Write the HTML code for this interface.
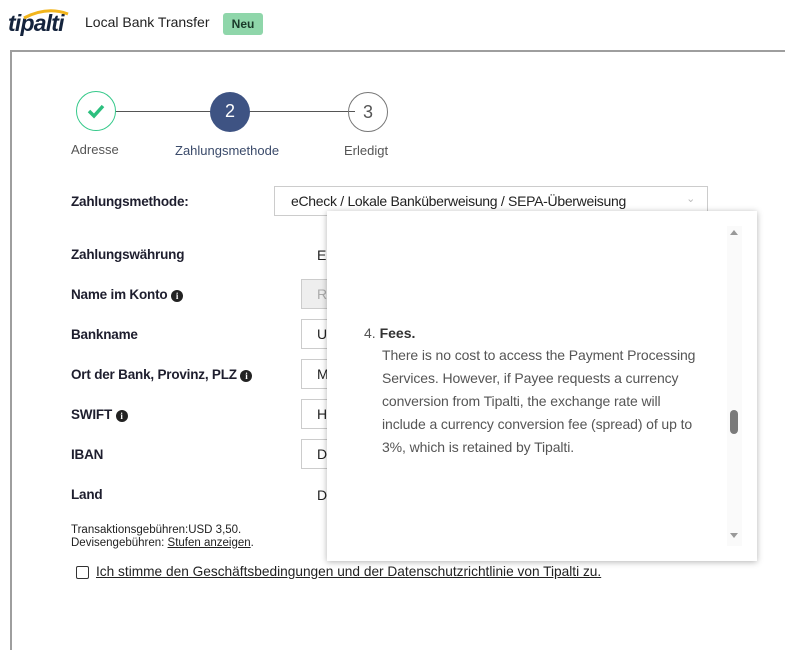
<!DOCTYPE html>
<html><head><meta charset="utf-8"><style>
*{box-sizing:border-box;margin:0;padding:0}
body{width:785px;height:610px;overflow:hidden;background:#fff;font-family:"Liberation Sans",sans-serif;color:#222;position:relative}
.abs{position:absolute}
.frame{left:10px;top:50px;width:800px;height:600px;border:2px solid #9e9e9e;border-right:none;border-bottom:none}
.lbl{left:71px;font-size:13.5px;font-weight:bold;color:#1e1e2e;letter-spacing:-0.2px}
.inp{left:301px;width:120px;height:30px;border:1px solid #ccc;background:#fff;font-size:14px;padding:6px 0 0 15px;color:#222}
.info{display:inline-block;width:12px;height:12px;border-radius:50%;background:#222;color:#fff;font-size:9px;text-align:center;line-height:12px;font-family:"Liberation Serif",serif;font-weight:bold;vertical-align:0px}
.circ{width:40px;height:40px;border-radius:50%;text-align:center;line-height:38px;font-size:18px}
.slbl{font-size:13px;color:#555}
</style></head><body>
<div class="abs" style="left:8px;top:10px;font-size:23px;font-weight:bold;font-style:italic;color:#14233c;letter-spacing:-0.8px">tipalti</div>
<svg class="abs" style="left:22px;top:8px" width="50" height="12"><path d="M2 10 Q25 -2 46 6" stroke="#f2b51c" stroke-width="3" fill="none"/></svg>
<div class="abs" style="left:85px;top:14px;font-size:14px;color:#222">Local Bank Transfer</div>
<div class="abs" style="left:223px;top:13px;width:40px;height:22px;background:#8fd6aa;border-radius:3px;font-size:12px;font-weight:bold;text-align:center;line-height:22px;color:#1b3a2a">Neu</div>
<div class="abs frame"></div>

<div class="abs" style="left:115px;top:111px;width:240px;height:1px;background:#555"></div>
<div class="abs circ" style="left:76px;top:91px;border:1.5px solid #35c98a"><svg width="20" height="20" style="margin-top:9px"><path d="M3 10 L8 15 L17 5" stroke="#2cbf7e" stroke-width="3.5" fill="none"/></svg></div>
<div class="abs circ" style="left:210px;top:92px;background:#3e5383;color:#fff">2</div>
<div class="abs circ" style="left:348px;top:92px;border:1px solid #777;color:#555">3</div>
<div class="abs slbl" style="left:71px;top:142px">Adresse</div>
<div class="abs slbl" style="left:175px;top:143px;color:#3a4a6a">Zahlungsmethode</div>
<div class="abs slbl" style="left:344px;top:143px">Erledigt</div>

<div class="abs lbl" style="top:194px">Zahlungsmethode:</div>
<div class="abs" style="left:274px;top:186px;width:434px;height:30px;border:1px solid #ccc;font-size:14px;padding:6px 0 0 16px;letter-spacing:-0.3px">eCheck / Lokale Banküberweisung / SEPA-Überweisung<span style="position:absolute;right:12px;top:5px;color:#bbb;font-size:11px">&#8964;</span></div>

<div class="abs lbl" style="top:247px">Zahlungswährung</div>
<div class="abs" style="left:317px;top:247px;font-size:14px">EUR</div>
<div class="abs lbl" style="top:287px">Name im Konto <span class="info">i</span></div>
<div class="abs inp" style="top:279px;background:#eee;color:#aaa">R</div>
<div class="abs lbl" style="top:327px">Bankname</div>
<div class="abs inp" style="top:319px">U</div>
<div class="abs lbl" style="top:367px">Ort der Bank, Provinz, PLZ <span class="info">i</span></div>
<div class="abs inp" style="top:359px">M</div>
<div class="abs lbl" style="top:407px">SWIFT <span class="info">i</span></div>
<div class="abs inp" style="top:399px">H</div>
<div class="abs lbl" style="top:447px">IBAN</div>
<div class="abs inp" style="top:439px">D</div>
<div class="abs lbl" style="top:487px">Land</div>
<div class="abs" style="left:317px;top:487px;font-size:14px">D</div>

<div class="abs" style="left:71px;top:524px;font-size:11.5px;line-height:13px;color:#222">Transaktionsgebühren:USD 3,50.<br>Devisengebühren: <u>Stufen anzeigen</u>.</div>
<div class="abs" style="left:76px;top:566px;width:13px;height:13px;border:1.5px solid #333;border-radius:2px"></div>
<div class="abs" style="left:96px;top:564px;font-size:13.7px;text-decoration:underline;color:#222">Ich stimme den Geschäftsbedingungen und der Datenschutzrichtlinie von Tipalti zu.</div>

<div class="abs" style="left:327px;top:211px;width:430px;height:350px;background:#fff;box-shadow:0 1px 6px rgba(0,0,0,.3)">
<div class="abs" style="left:37px;top:111px;font-size:14px;color:#555;line-height:23px;width:360px">4. <b style="color:#333">Fees.</b></div>
<div class="abs" style="left:55px;top:133px;font-size:14px;color:#555;line-height:23px;width:345px;letter-spacing:-0.1px">There is no cost to access the Payment Processing Services. However, if Payee requests a currency conversion from Tipalti, the exchange rate will<br>include a currency conversion fee (spread) of up to<br>3%, which is retained by Tipalti.</div>
<div class="abs" style="left:400px;top:15px;width:15px;height:320px;background:#fafafa"></div>
<div class="abs" style="left:403px;top:19px;width:0;height:0;border-left:4px solid transparent;border-right:4px solid transparent;border-bottom:5px solid #999"></div>
<div class="abs" style="left:403px;top:322px;width:0;height:0;border-left:4px solid transparent;border-right:4px solid transparent;border-top:5px solid #999"></div>
<div class="abs" style="left:403px;top:199px;width:8px;height:24px;border-radius:4px;background:#7a7a7a"></div>
</div>
</body></html>
